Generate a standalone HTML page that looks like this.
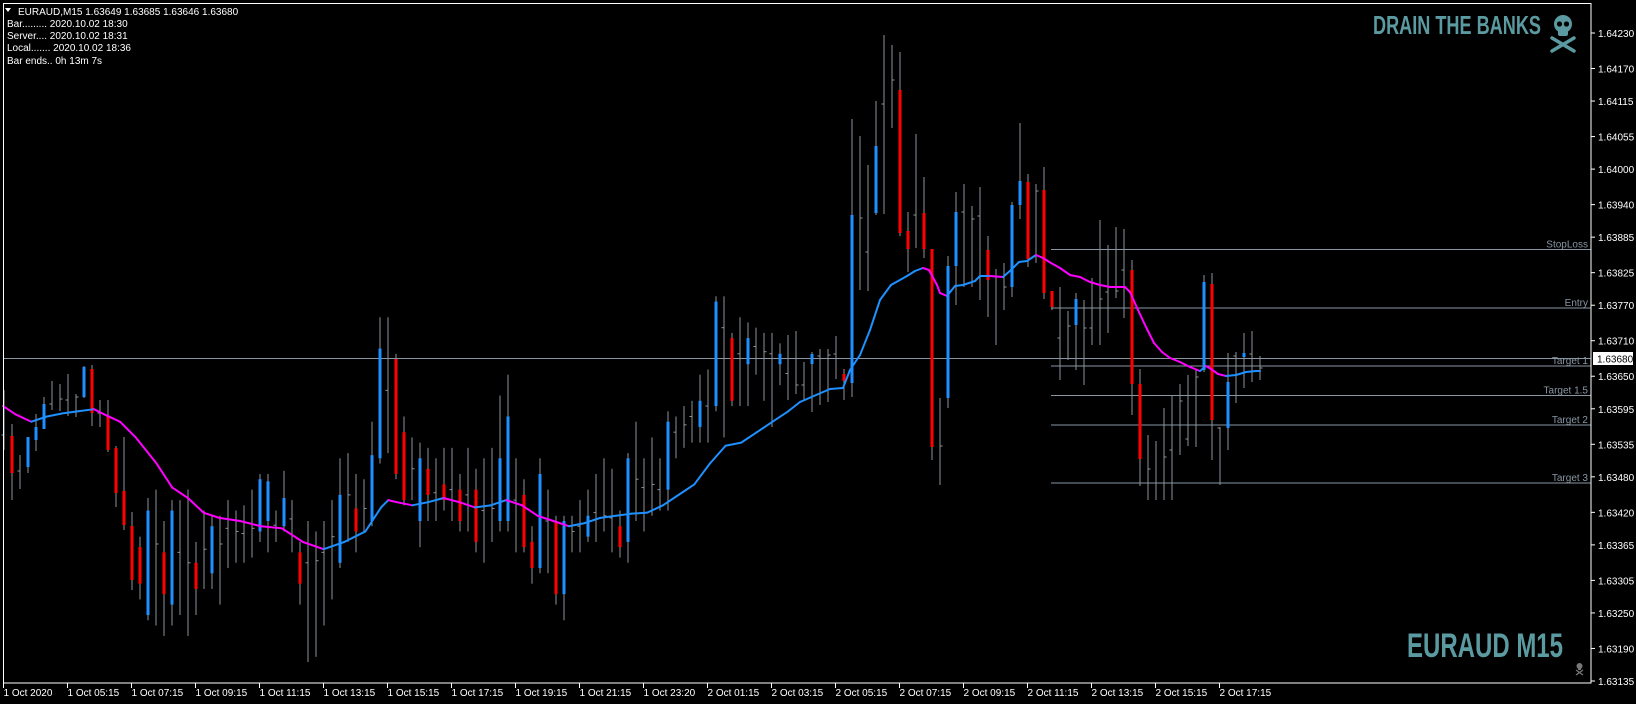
<!DOCTYPE html>
<html><head><meta charset="utf-8"><style>
html,body{margin:0;padding:0;background:#000;}
svg{display:block;}
text{font-family:"Liberation Sans",sans-serif;}
</style></head><body>
<svg id="s" width="1636" height="704" viewBox="0 0 1636 704" xmlns="http://www.w3.org/2000/svg">
<rect width="1636" height="704" fill="#000"/>
<g id="lines"></g>
<g id="candles"></g>
<g id="ma"></g>
<g id="axis"></g>
<!-- header -->
<g fill="#fff" font-size="10">
<path d="M5 8 L11 8 L8 12 Z" fill="#fff"/>
<text x="18" y="15">EURAUD,M15  1.63649 1.63685 1.63646 1.63680</text>
<text x="7" y="27">Bar......... 2020.10.02 18:30</text>
<text x="7" y="39">Server.... 2020.10.02 18:31</text>
<text x="7" y="51">Local....... 2020.10.02 18:36</text>
<text x="7" y="64">Bar ends.. 0h 13m 7s</text>
</g>
<text x="1373" y="34" font-size="26" font-weight="bold" fill="#5a9aa0" textLength="168" lengthAdjust="spacingAndGlyphs">DRAIN THE BANKS</text>
<g fill="#5a9aa0">
<circle cx="1563" cy="24" r="9"/>
<rect x="1558" y="27" width="10" height="9" rx="2"/>
<circle cx="1559.5" cy="24" r="2.6" fill="#000"/>
<circle cx="1566.5" cy="24" r="2.6" fill="#000"/>
<g stroke="#5a9aa0" stroke-width="3.5" stroke-linecap="round"><line x1="1552" y1="38" x2="1574" y2="51"/><line x1="1574" y1="38" x2="1552" y2="51"/></g>
</g>
<text x="1407" y="657" font-size="34" font-weight="bold" fill="#5a9aa0" textLength="156" lengthAdjust="spacingAndGlyphs">EURAUD M15</text>
<g fill="#777">
<circle cx="1579.5" cy="666" r="3"/><rect x="1578" y="667" width="3" height="3"/>
<g stroke="#777" stroke-width="1.3"><line x1="1576" y1="670" x2="1583" y2="675"/><line x1="1583" y1="670" x2="1576" y2="675"/></g>
</g>
</svg>
<script>
var NS="http://www.w3.org/2000/svg";
function el(p,t,a){var e=document.createElementNS(NS,t);for(var k in a)e.setAttribute(k,a[k]);p.appendChild(e);return e;}
var G=document.getElementById('candles'),L=document.getElementById('lines'),M=document.getElementById('ma'),A=document.getElementById('axis');
var BLUE="#1e90ff",RED="#ff0000",GRAY="#8c949c";
function R(p){return p*1.045-1.5;}
// real coords [type, bTop, bBot, wTop, wBot]
var real0=[
['g',433,437,390,450],['r',436,473,424,500],['g',470,472,455,489],['b',437,467,437,473],['b',427,440,414,451],
['b',404,429,397,429],['g',403,405,381,410],['g',398,400,384,411],['g',399,401,374,416],['g',396,398,394,417],
['b',367,397,366,398],['r',369,413,365,426],['g',412,414,400,427],['r',416,450,400,452],['r',448,493,446,507],
['r',491,525,437,530],['r',526,580,512,590]];
var perc=[
['r',525,560,515,575],['b',490,590,478,595],['g',520,524,470,600],['r',530,570,500,610],['b',490,580,480,600],
['g',528,532,480,590],['g',538,542,470,610],['r',540,565,520,590],['g',525,529,490,565],['b',505,550,495,565],
['g',520,524,495,580],['g',505,509,480,545],['g',508,512,490,540],['g',510,514,485,540],['g',505,509,470,535],
['b',460,510,455,520],['b',462,500,455,530],['g',502,506,490,520],['b',478,505,452,510],['g',496,500,480,530],
['r',530,560,520,580],['g',538,542,500,635],['g',536,540,510,630],['g',528,532,500,600],['g',513,517,480,575],
['b',475,540,440,545],['g',473,477,435,520],['r',488,510,455,530],['g',486,490,460,510],['b',437,500,405,505],
['b',335,440,305,445],['g',373,377,305,435],['r',345,455,340,460],['r',415,480,400,485],['g',448,452,420,480],
['b',440,500,425,525],['r',450,475,430,500],['g',471,475,440,500],['r',465,480,430,490],['g',468,472,430,500],
['r',470,500,455,510],['g',473,477,430,510],['r',470,520,450,530],['g',488,492,440,540],['g',486,490,430,520],
['b',440,500,380,510],['b',400,500,360,510],['g',478,482,440,530],['r',475,525,460,530],['r',520,545,505,560],
['b',455,545,440,550],['g',498,502,470,550],['r',500,570,495,580],['b',500,570,495,595],['g',508,512,495,530],
['g',503,507,480,530],['b',495,515,470,520],['g',490,494,455,520],['g',493,497,440,510],['g',495,499,450,530],
['r',505,525,490,535],['b',440,520,435,540],['g',458,462,405,500],['g',466,470,440,510],['g',463,467,420,495],
['g',468,472,440,490],['b',405,470,395,490],['g',413,417,400,440],['g',406,410,390,430],['g',398,402,385,425],
['b',385,410,360,425],['g',388,392,355,425],['b',290,390,285,395],['g',313,317,285,420],['r',325,385,320,390],
['g',338,342,305,390],['b',325,350,310,390],['g',331,335,315,360],['g',336,340,320,385],['g',338,342,320,410],
['b',340,350,330,370]];
var real1=[
['g',372,375,335,400],['g',384,386,331,394],['g',384,386,362,400],['b',354,364,352,412],['g',355,357,349,405],
['g',354,356,349,402],['g',353,355,336,379],['r',374,381,369,400],['b',215,383,119,397],['g',217,219,136,290],
['g',251,253,165,291],['b',146,213,101,215],['g',103,105,35,214],['g',79,81,45,128],['r',90,233,52,236],
['r',231,249,212,272],['g',214,216,134,248],['r',213,249,177,258],['r',249,447,249,460],['g',445,447,398,485],
['b',266,398,256,408],['b',212,266,192,305],['g',211,213,184,287],['g',218,220,206,287],['g',215,217,187,300],
['r',250,280,236,317],['g',276,278,269,345],['g',286,288,263,310],['b',205,287,202,297],['b',181,205,123,219],
['r',182,259,174,267],['g',190,192,184,263],['r',190,293,167,299],['r',291,307,291,310],['g',337,339,287,380],
['g',325,327,311,360],['b',299,325,293,370],['g',327,329,300,385],['g',327,329,278,345],['g',298,300,220,345],
['g',291,293,245,333],['g',290,292,227,298],['g',269,271,229,318],['r',270,384,260,415],['r',384,459,369,486],
['g',468,470,435,500],['g',482,484,441,500],['g',456,458,408,500],['g',449,451,395,500],['g',400,402,384,455],
['g',438,440,375,446],['g',376,378,370,447],['b',282,370,275,372],['r',284,420,273,460],['g',427,429,427,485],
['b',382,428,353,450],['g',355,357,352,403],['b',353,357,333,388],['g',353,355,331,382],['g',367,369,356,380]];
var all=[];
real0.forEach(function(c){all.push(c);});
perc.forEach(function(c){all.push([c[0],R(c[1]),R(c[2]),R(c[3]),R(c[4])]);});
real1.forEach(function(c){all.push(c);});
all.forEach(function(c,i){
  var x=3.5+8*i;
  var col=c[0]=='b'?BLUE:c[0]=='r'?RED:GRAY;
  el(G,'rect',{x:x,y:c[3],width:1,height:c[4]-c[3],fill:GRAY});
  if(c[0]=='g'){el(G,'rect',{x:x+ (i%2?1:-2),y:(c[1]+c[2])/2-0.5,width:2,height:1,fill:GRAY});}
  else el(G,'rect',{x:x-1,y:c[1],width:3,height:Math.max(2,c[2]-c[1]),fill:col});
});
// MA
var mp=[[3,390],[15,398],[30,405],[45,400],[60,397],[75,395],[90,393],[100,398],[115,405],[130,420],[150,445],[165,468],[180,478],[195,492],[210,497],[230,500],[250,505],[270,507],[290,520],[310,527],[330,520],[350,510],[365,487],[372,480],[380,482],[395,485],[410,482],[425,478],[440,482],[455,487],[470,485],[485,480],[500,485],[515,495],[530,500],[545,505],[560,502],[575,497],[590,495],[605,493],[620,492],[635,485],[650,475],[665,465],[680,445],[695,428],[710,425],[725,415],[740,405],[755,395]];
var pts=mp.map(function(p){return [p[0]*1.044,R(p[1])];});
var realMA=[[800,402],[830,389],[843,388],[850,370],[860,355],[870,330],[880,300],[891,285],[907,276],[915,271],[923,268],[929,270],[937,285],[940,293],[947,296],[955,286],[963,285],[975,281],[980,276],[990,276],[1003,277],[1011,270],[1019,262],[1027,261],[1036,255],[1043,258],[1051,263],[1060,268],[1070,275],[1080,277],[1090,282],[1100,285],[1110,287],[1118,287],[1125,287],[1130,292],[1138,310],[1146,327],[1154,343],[1162,352],[1170,358],[1180,362],[1190,367],[1200,371],[1206,366],[1211,369],[1218,374],[1226,376],[1236,375],[1246,372],[1256,371],[1260,371]];
realMA.forEach(function(p){pts.push(p);});
var prev=BLUE;
for(var i=1;i<pts.length;i++){
  var a=pts[i-1],b=pts[i];var col=b[1]<a[1]-0.3?BLUE:(b[1]>a[1]+0.3?"#ff00ff":prev);prev=col;
  el(M,'line',{x1:a[0],y1:a[1],x2:b[0],y2:b[1],stroke:col,'stroke-width':2,'stroke-linecap':'round'});
}
// horizontal lines
var LG="#8896a4";
el(L,'line',{x1:3,y1:358.5,x2:1591,y2:358.5,stroke:LG,'stroke-width':1});
[[249.5,'StopLoss'],[308,'Entry'],[366,'Target 1'],[395.5,'Target 1.5'],[425,'Target 2'],[483,'Target 3']].forEach(function(l){
  el(L,'line',{x1:1051,y1:l[0],x2:1591,y2:l[0],stroke:LG,'stroke-width':1});
  var t=el(L,'text',{x:1588,y:l[0]-2,'font-size':10,fill:"#8896a4",'text-anchor':'end'});t.textContent=l[1];
});
// axis
el(A,'rect',{x:3.5,y:3.5,width:1587.5,height:679.5,fill:'none',stroke:'#fff','stroke-width':1});
var prices=['1.64230','1.64170','1.64115','1.64055','1.64000','1.63940','1.63885','1.63825','1.63770','1.63710','1.63650','1.63595','1.63535','1.63480','1.63420','1.63365','1.63305','1.63250','1.63190','1.63135'];
prices.forEach(function(p){
  var y=33+(1.64230-parseFloat(p))*59178;
  el(A,'line',{x1:1591,y1:y,x2:1595,y2:y,stroke:'#fff'});
  var t=el(A,'text',{x:1598,y:y+4,'font-size':10,fill:'#fff'});t.textContent=p;
});
el(A,'rect',{x:1593,y:352,width:40,height:13,fill:'#fff'});
var t=el(A,'text',{x:1597,y:362.5,'font-size':10,fill:'#000'});t.textContent='1.63680';
var times=['1 Oct 2020','1 Oct 05:15','1 Oct 07:15','1 Oct 09:15','1 Oct 11:15','1 Oct 13:15','1 Oct 15:15','1 Oct 17:15','1 Oct 19:15','1 Oct 21:15','1 Oct 23:20','2 Oct 01:15','2 Oct 03:15','2 Oct 05:15','2 Oct 07:15','2 Oct 09:15','2 Oct 11:15','2 Oct 13:15','2 Oct 15:15','2 Oct 17:15'];
times.forEach(function(s,i){
  var x=3.5+64*i;
  el(A,'line',{x1:x,y1:683,x2:x,y2:688,stroke:'#fff'});
  var t=el(A,'text',{x:x,y:696,'font-size':10,fill:'#fff'});t.textContent=s;
});
</script>
</body></html>
